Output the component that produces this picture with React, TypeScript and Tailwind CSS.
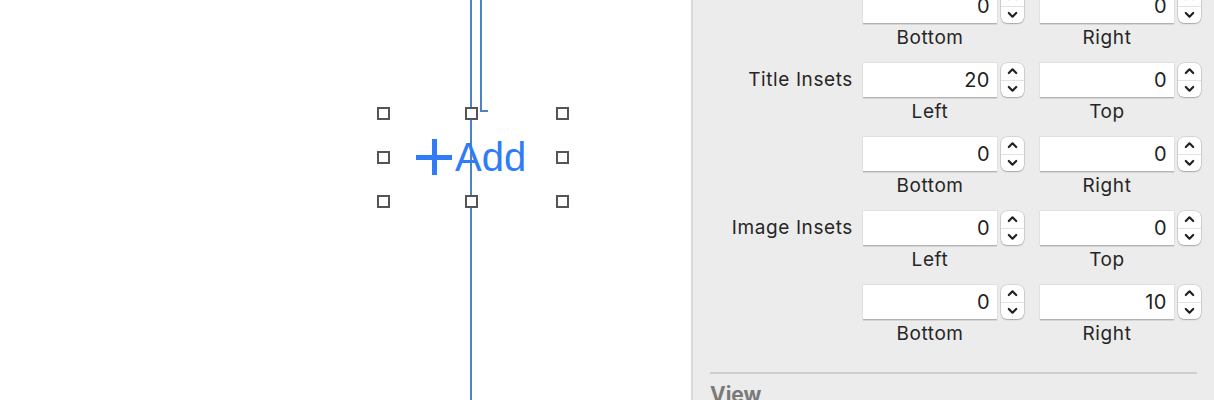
import React from "react";

const font = { fontFamily: "Inter, 'Noto Sans', sans-serif" };

function Stepper() {
  return (
    <div className="flex h-[34px] w-[23px] flex-col overflow-hidden rounded-[6px] bg-white shadow-[0_0_0_0.5px_rgba(0,0,0,0.18),0_1px_1.5px_rgba(0,0,0,0.22)]">
      <div className="flex flex-1 items-center justify-center border-b border-[#e2e2e2]">
        <svg width="11" height="8" viewBox="0 0 11 8">
          <path d="M1.8 6 L5.5 2.3 L9.2 6" fill="none" stroke="#222222" strokeWidth="2.2" strokeLinecap="round" strokeLinejoin="round" />
        </svg>
      </div>
      <div className="flex flex-1 items-center justify-center">
        <svg width="11" height="8" viewBox="0 0 11 8">
          <path d="M1.8 2 L5.5 5.7 L9.2 2" fill="none" stroke="#222222" strokeWidth="2.2" strokeLinecap="round" strokeLinejoin="round" />
        </svg>
      </div>
    </div>
  );
}

function Field({ value }: { value: string }) {
  return (
    <div className="flex items-center gap-[4px]">
      <div className="flex h-[34px] w-[134px] items-center justify-end bg-white pr-[7px] text-[20px] tracking-[0.5px] text-[#1f1f1f] shadow-[0_0_0_0.5px_rgba(0,0,0,0.1),0_1.5px_0_0_#bdbdbd]">
        {value}
      </div>
      <Stepper />
    </div>
  );
}

const labelCls = "text-[19px] tracking-[0.6px] text-[#262626]";

function Block({ label, a, b, la, lb }: { label?: string; a: string; b: string; la: string; lb: string }) {
  return (
    <div className="flex flex-col">
      <div className="flex h-[34px] items-center">
        <div className={`w-[170px] pr-[10px] text-right whitespace-nowrap ${labelCls}`}>{label}</div>
        <Field value={a} />
        <div className="w-[16px]" />
        <Field value={b} />
      </div>
      <div className="flex h-[40px] items-start">
        <div className="w-[170px]" />
        <div className={`w-[134px] text-center leading-[30px] ${labelCls}`}>{la}</div>
        <div className="w-[43px]" />
        <div className={`w-[134px] text-center leading-[30px] ${labelCls}`}>{lb}</div>
      </div>
    </div>
  );
}

function Handle({ x, y }: { x: number; y: number }) {
  return (
    <div
      className="absolute h-[13px] w-[13px] border-2 border-[#555555] bg-white"
      style={{ left: x - 6.5, top: y - 6.5 }}
    />
  );
}

export default function App() {
  return (
    <div className="flex h-[400px] w-[1214px] overflow-hidden bg-white" style={font}>
      <div className="relative h-full w-[691px] bg-white">
        <div className="absolute left-[470px] top-0 h-[400px] w-[2px] bg-[#4d82c6]" />
        <div className="absolute left-[480px] top-0 h-[112px] w-[2px] bg-[#4d82c6]" />
        <div className="absolute left-[480px] top-[110px] h-[2px] w-[8px] bg-[#4d82c6]" />
        <div className="absolute left-[416px] top-[134px] flex items-center">
          <svg width="37" height="37" viewBox="0 0 37 37" className="mr-[2px]">
            <rect x="0" y="16" width="36" height="5" fill="#2f7cf6" />
            <rect x="16" y="0" width="5" height="36" fill="#2f7cf6" />
          </svg>
          <span className="text-[40px] leading-[46px] text-[#2f7cf6]" style={{ fontFamily: "'Liberation Sans', Arial, sans-serif" }}>
            Add
          </span>
        </div>
        <Handle x={383} y={113} />
        <Handle x={471} y={113} />
        <Handle x={562} y={113} />
        <Handle x={383} y={157} />
        <Handle x={562} y={157} />
        <Handle x={383} y={201} />
        <Handle x={471} y={201} />
        <Handle x={562} y={201} />
      </div>
      <div className="h-full w-[2px] bg-[#d9d9d9]" />
      <div className="flex h-full flex-1 flex-col bg-[#ececec]">
        <div className="-mt-[11px] flex shrink-0 flex-col">
          <Block a="0" b="0" la="Bottom" lb="Right" />
          <Block label="Title Insets" a="20" b="0" la="Left" lb="Top" />
          <Block a="0" b="0" la="Bottom" lb="Right" />
          <Block label="Image Insets" a="0" b="0" la="Left" lb="Top" />
          <Block a="0" b="10" la="Bottom" lb="Right" />
        </div>
        <div className="ml-[17px] mr-[17px] mt-[13px] h-[2px] shrink-0 bg-[#cfcfcf]" />
        <div className="ml-[17px] mt-[7px] shrink-0 text-[21px] font-bold leading-[28px] text-[#7a7a7a]">View</div>
      </div>
    </div>
  );
}
